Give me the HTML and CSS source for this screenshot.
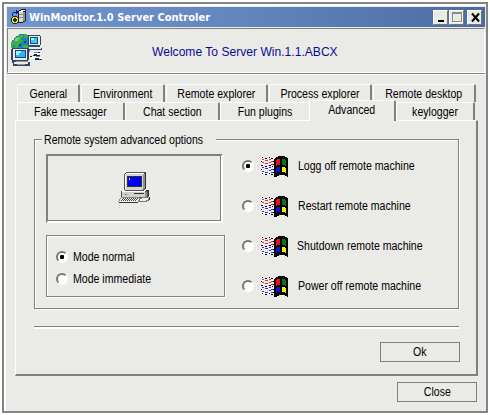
FILE: index.html
```html
<!DOCTYPE html>
<html lang="en">
<head>
<meta charset="utf-8">
<title>WinMonitor.1.0 Server Controler</title>
<link rel="stylesheet" href="styles.css">
</head>
<body>
<svg class="defs" width="0" height="0" aria-hidden="true">
  <symbol id="winflag" viewBox="0 0 27 21">
    <path fill="#000" d="M13 3h1V2h1V1h2V0h7v1h2v1h1v19h-1v-1h-2v-1h-6v1h-2v1h-2v1h-1z"/>
    <path fill="#f01010" d="M15 4h1V3h3v6h-3v1h-1z"/>
    <path fill="#087808" d="M21 3h3v1h1v6h-1V9h-3z"/>
    <path fill="#1010e8" d="M15 12h1v-1h3v5h-3v1h-1z"/>
    <path fill="#f8f000" d="M21 11h3v1h1v5h-1v-1h-3z"/>
    <path fill="none" stroke="#fff" d="M1 4.500h12M1 8.500h12M1 12.500h12M1 16.500h12" stroke-dasharray="2 1"/>
    <path fill="none" stroke="#000" d="M1 1.500h1M4 2.500h2M8 1.500h1M10 2.500h2M0 5.500h1M0 9.500h2M4 10.500h2M8 9.500h2M11 10.500h1M0 13.500h1M1 17.500h1M4 18.500h2M8 17.500h1M10 18.500h2M12.500 5v1M12.500 8v1M12.500 13v1M12.500 16v1"/>
    <path fill="none" stroke="#e83030" d="M1 3.500h2M4 4.500h3M8 3.500h2M10 5.500h2M1 6.500h2M4 7.500h3M8 6.500h2M10 8.500h2"/>
    <path fill="none" stroke="#3030f0" d="M1 11.500h2M4 12.500h3M8 11.500h2M10 13.500h2M1 15.500h2M4 16.500h3M8 14.500h2M10 16.500h2"/>
  </symbol>
</svg>
<main class="window">
  <header class="titlebar">
    <svg class="app-icon" width="15" height="16" shape-rendering="crispEdges">
      <path fill="#222" d="M7 2h1V1h2V0h5v12h-1v1h-2v1H7z"/>
      <path fill="#d8d8d4" d="M8 2h4v11H8z"/><path fill="#fff" d="M8 2h2V1h4v1h-2v1H8z"/>
      <path fill="#909090" d="M12 3h2v9h-2zM8 5h4v1H8zM8 8h4v1H8z"/>
      <path fill="#102080" d="M1 4h1V3h3V1h1v1h1v2H6v1H5V4H2v3H1z"/>
      <path fill="#222" d="M2 7h4v1h1v1h1v4H7v1H6v1H2v-1H1v-1H0V9h1V8h1z"/>
      <path fill="#f4e820" d="M2 8h4v1h1v4H6v1H2v-1H1V9h1z"/>
      <path fill="#222" d="M3 9h2v4H3zM2 10h4v2H2z"/>
    </svg>
    <h1 class="title">WinMonitor.1.0 Server Controler</h1>
    <div class="controls">
      <span class="ctl"><svg width="14" height="15"><path fill="#000" d="M4 10h6v2H4z"/></svg></span>
      <span class="ctl"><svg width="14" height="15" shape-rendering="crispEdges"><path fill="none" stroke="#8a8a88" d="M2.500 2.500h9v9h-9zM2 3.500h10"/><path fill="none" stroke="#fff" d="M3 12.500h9.500V3"/></svg></span>
      <span class="ctl close-ctl"><svg width="14" height="15"><path fill="none" stroke="#000" stroke-width="2" d="M4 3.500l7 8M11 3.500l-7 8"/></svg></span>
    </div>
  </header>
  <section class="banner">
    <svg class="net-icon" width="33" height="33" shape-rendering="crispEdges">
      <path fill="#1884c8" d="M4 5h2V3h3V1h7v1h4v17h-3v2H4v-3H2v-3H1V9h1V7h2z"/>
      <path fill="#40b040" d="M3 7h2V4h3V2h5v3h-2v2h2v2h-3v3H8v3H5v-3H3v3H1V9h2zM14 1h3v2h3v5h-2V5h-4zM13 12h5v5h-4v-2h-1z"/>
      <path fill="#78d878" d="M6 5h4v1H8v2H5V6h1z"/>
      <path fill="#105828" d="M2 15h5v1H2zM9 11h2v2H9zM14 8h2v2h-2z"/>
      <path fill="#38445c" d="M18 2h12v1h1v9h-1v3h2v2H18v-2h2v-2h-2z"/>
      <path fill="#e8ecec" d="M19 3h11v9H19zM19 14h12v2H19z"/>
      <path fill="#104890" d="M20 4h8v7h-8z"/><path fill="#38c8f8" d="M21 5h6v5h-6z"/><path fill="#b8f4ff" d="M21 5h3v2h-3z"/>
      <path fill="#38445c" d="M2 15h16v1h1v11h-1v2h2v4H3v-3H2v-3H1V16h1z"/>
      <path fill="#ececec" d="M3 16h14v11H3zM4 29h14v2H4z"/>
      <path fill="#104890" d="M5 17h11v8H5z"/><path fill="#28b4f4" d="M6 18h9v6H6z"/><path fill="#a8f0ff" d="M6 18h5v2H9v2H6z"/>
      <path fill="#fff" d="M21 20h11v1H21zM20 24h12v2H20z"/>
      <path fill="#202838" d="M24 19h6v1h-6zM24 21h3v1h3v1h-7v-1h1zM20 23h2v1h-2zM25 25h4v1h3v1h-7z"/>
      <path fill="#48a0d0" d="M24 19h4v1h-4zM26 23h4v1h-4z"/>
      <path fill="#909498" d="M6 28h12v1H6zM7 31h8v1H7z"/>
    </svg>
    <p class="welcome">Welcome To Server Win.1.1.ABCX</p>
  </section>
  <div class="body">
    <nav class="tabs">
      <div class="tab-row">
        <span class="tab t1"><b>General</b></span><span class="tab t2"><b>Environment</b></span><span class="tab t3"><b>Remote explorer</b></span><span class="tab t4"><b>Process explorer</b></span><span class="tab t5"><b>Remote desktop</b></span>
      </div>
      <div class="tab-row">
        <span class="tab t6"><b>Fake messager</b></span><span class="tab t7"><b>Chat section</b></span><span class="tab t8"><b>Fun plugins</b></span><span class="tab selected"><b>Advanced</b></span><span class="tab t9"><b>keylogger</b></span>
      </div>
    </nav>
    <section class="page">
      <fieldset class="group">
        <legend><b>Remote system advanced options</b></legend>
        <div class="left">
          <div class="preview">
            <svg width="32" height="32" shape-rendering="crispEdges">
              <path fill="#555" d="M6 2h1V1h1V0h20v17h-1v1h-1v1H7v-1H6z"/>
              <path fill="#d4d4d0" d="M7 2h18v16H7z"/><path fill="#fff" d="M8 1h18v1H8v15H7V2h1z"/>
              <path fill="#909090" d="M25 2h2v15h-2z"/>
              <path fill="#303030" d="M27 1h1v16h-1zM9 4h15v11H9z"/><path fill="#0000f0" d="M10 5h13v9H10z"/><path fill="#d8e8ff" d="M11 6h1v2h-1z"/>
              <path fill="#555" d="M3 19h26v-1h2v7h-1v1H3z"/>
              <path fill="#d0d0cc" d="M4 20h23v5H4z"/><path fill="#fff" d="M4 19h23v1H4z"/><path fill="#909090" d="M27 20h2v5h-2z"/>
              <path fill="#303030" d="M16 21h10v1H16zM28 18h2v1h-2zM30 18h1v6h-1z"/><path fill="#30a060" d="M7 22h2v1H7z"/>
              <path fill="#888" d="M3 25h18v5h-1v1H1v-1H0v-1h1v-2h1v-1h1z"/>
              <path fill="#f4f4f4" d="M3 26h18v2h-1v2H1v-1h1v-2h1z"/>
              <path fill="none" stroke="#444" stroke-dasharray="1 1" d="M5 26.500h15M4 27.500h15M3 28.500h15"/>
              <path fill="#333" d="M1 30h19v1H1zM22 30h7v-1h2v-1h1v-3h-1v4h-2v1h-7z"/>
              <path fill="#777" d="M21 26h2v-1h7v1h1v3h-2v1h-8z"/>
              <path fill="#eee" d="M22 27h2v-1h6v2h-2v1h-6z"/>
            </svg>
          </div>
          <div class="modes">
            <label class="opt"><i class="radio on"></i><b>Mode normal</b></label>
            <label class="opt"><i class="radio"></i><b>Mode immediate</b></label>
          </div>
        </div>
        <div class="actions">
          <label class="act"><i class="radio on"></i><svg class="flag" width="27" height="21" shape-rendering="crispEdges"><use href="#winflag"/></svg><b>Logg off remote machine</b></label>
          <label class="act"><i class="radio"></i><svg class="flag" width="27" height="21" shape-rendering="crispEdges"><use href="#winflag"/></svg><b>Restart remote machine</b></label>
          <label class="act"><i class="radio"></i><svg class="flag" width="27" height="21" shape-rendering="crispEdges"><use href="#winflag"/></svg><b class="shut">Shutdown remote machine</b></label>
          <label class="act"><i class="radio"></i><svg class="flag" width="27" height="21" shape-rendering="crispEdges"><use href="#winflag"/></svg><b>Power off remote machine</b></label>
        </div>
      </fieldset>
      <div class="rule"></div>
      <button class="btn ok"><b>Ok</b></button>
    </section>
    <button class="btn close"><b>Close</b></button>
  </div>
</main>
</body>
</html>
```
FILE: styles.css
```css
* { box-sizing: border-box; }
body { margin: 0; background: #fff; font: 12px/14px "Liberation Sans", Arial, sans-serif; color: #000; }
.defs { display: block; position: absolute; }
svg { display: block; flex: none; }
b { display: inline-block; font-weight: normal; transform: scaleX(0.88); white-space: nowrap; }
.window { margin: 2px; width: 486px; height: 411px; border: 2px solid #858585; background: #eaeae6; box-shadow: inset 2px 2px #fff; padding: 3px 1px 0 3px; display: flex; flex-direction: column; }
.titlebar { height: 20px; background: linear-gradient(90deg, #7095cf, #6285bd 50%, #4b6ca3); display: flex; align-items: center; padding: 0 3px 0 4px; flex: none; }
.title { margin: 1px 0 0 3px; font: bold 11px/14px "DejaVu Sans Condensed", "DejaVu Sans", sans-serif; color: #fff; letter-spacing: 0.01px; white-space: nowrap; }
.controls { margin-left: auto; display: flex; gap: 1px; }
.ctl { width: 15px; height: 15px; background: #eaeae6; border: 1px solid; border-color: #fff #777 #777 #fff; display: flex; align-items: center; justify-content: center; overflow: hidden; }
.close-ctl { margin-left: 2px; }
.banner { height: 45px; margin-top: 1px; border: 1px solid; border-color: #808080 #fff #fff #808080; display: flex; flex: none; padding: 4px 0 0 2px; }
.welcome { margin: 11px 0 0 109px; font-size: 13px; line-height: 16px; color: #0a0a94; white-space: nowrap; transform: scaleX(0.93); transform-origin: 0 50%; }
.body { border-top: 1px solid #808080; box-shadow: inset 0 1px #fff; padding: 10px 0 0 8px; flex: 1; display: flex; flex-direction: column; }
.tabs { padding-left: 2px; flex: none; }
.tab-row { display: flex; height: 18px; }
.tab { height: 18px; border-top: 1px solid #fff; border-left: 1px solid #fff; border-right: 2px solid #808080; border-radius: 2px 2px 0 0; line-height: 18px; white-space: nowrap; display: flex; justify-content: center; }
.t1 { width: 63px; margin-right: 1px; }
.t2 { width: 84px; margin-right: 1px; }
.t3 { width: 102px; margin-right: 1px; }
.t4 { width: 103px; margin-right: 1px; }
.t5 { width: 103px; }
.t6 { width: 108px; }
.t7 { width: 95px; }
.t8 { width: 89px; border-right: 0; }
.t9 { width: 79px; }
.selected { width: 87px; height: 21px; margin-top: -2px; background: #eaeae6; position: relative; }
.page { width: 463px; height: 256px; border: 2px solid #808080; border-width: 1px 2px 2px 1px; border-top-color: #fff; border-left-color: #fff; padding: 0 15px 0 18px; flex: none; display: flex; flex-direction: column; }
.group { position: relative; margin: 18px 0 0; height: 170px; width: 425px; min-width: 0; border: 1px solid #808080; box-shadow: 1px 1px #fff, inset 1px 1px #fff; padding: 0; display: flex; flex: none; }
.group legend { position: absolute; left: 7px; top: -8px; margin: 0; padding: 0 0 0 2px; width: 174px; background: #eaeae6; line-height: 16px; white-space: nowrap; }
legend b, .opt b, .act b { transform-origin: 0 50%; }
.left { width: 199px; padding: 14px 0 0 11px; }
.preview { width: 177px; height: 69px; border: 2px solid; border-color: #808080 #fff #fff #808080; box-shadow: inset -1px -1px #808080; display: flex; justify-content: center; padding: 16px 1px 0 0; }
.modes { width: 179px; height: 62px; margin-top: 12px; border: 1px solid #808080; box-shadow: 1px 1px #fff, inset 1px 1px #fff; padding: 10px 0 0 9px; }
.opt { display: flex; height: 22px; align-items: center; gap: 5px; white-space: nowrap; }
.radio { width: 12px; height: 12px; border: 2px solid; border-color: #777 #fff #fff #777; border-radius: 50%; background: #fff; display: flex; align-items: center; justify-content: center; flex: none; }
.radio.on::after { content: ""; width: 4px; height: 4px; border-radius: 1px; background: #000; }
.actions { padding: 6px 0 0 8px; }
.act { display: flex; height: 40px; align-items: center; white-space: nowrap; }
.flag { margin-left: 7px; }
.act b { margin-left: 10px; }
.act .shut { margin-left: 9px; }
.rule { height: 3px; width: 425px; margin-top: 17px; border-top: 1px solid #808080; background: #fff; flex: none; }
.btn { width: 80px; height: 20px; border: 1px solid #80807c; background: #eaeae6; font: inherit; color: inherit; padding: 0; flex: none; }
.ok { margin: 13px 0 0 346px; }
.close { margin: 6px 0 0 382px; }
```
